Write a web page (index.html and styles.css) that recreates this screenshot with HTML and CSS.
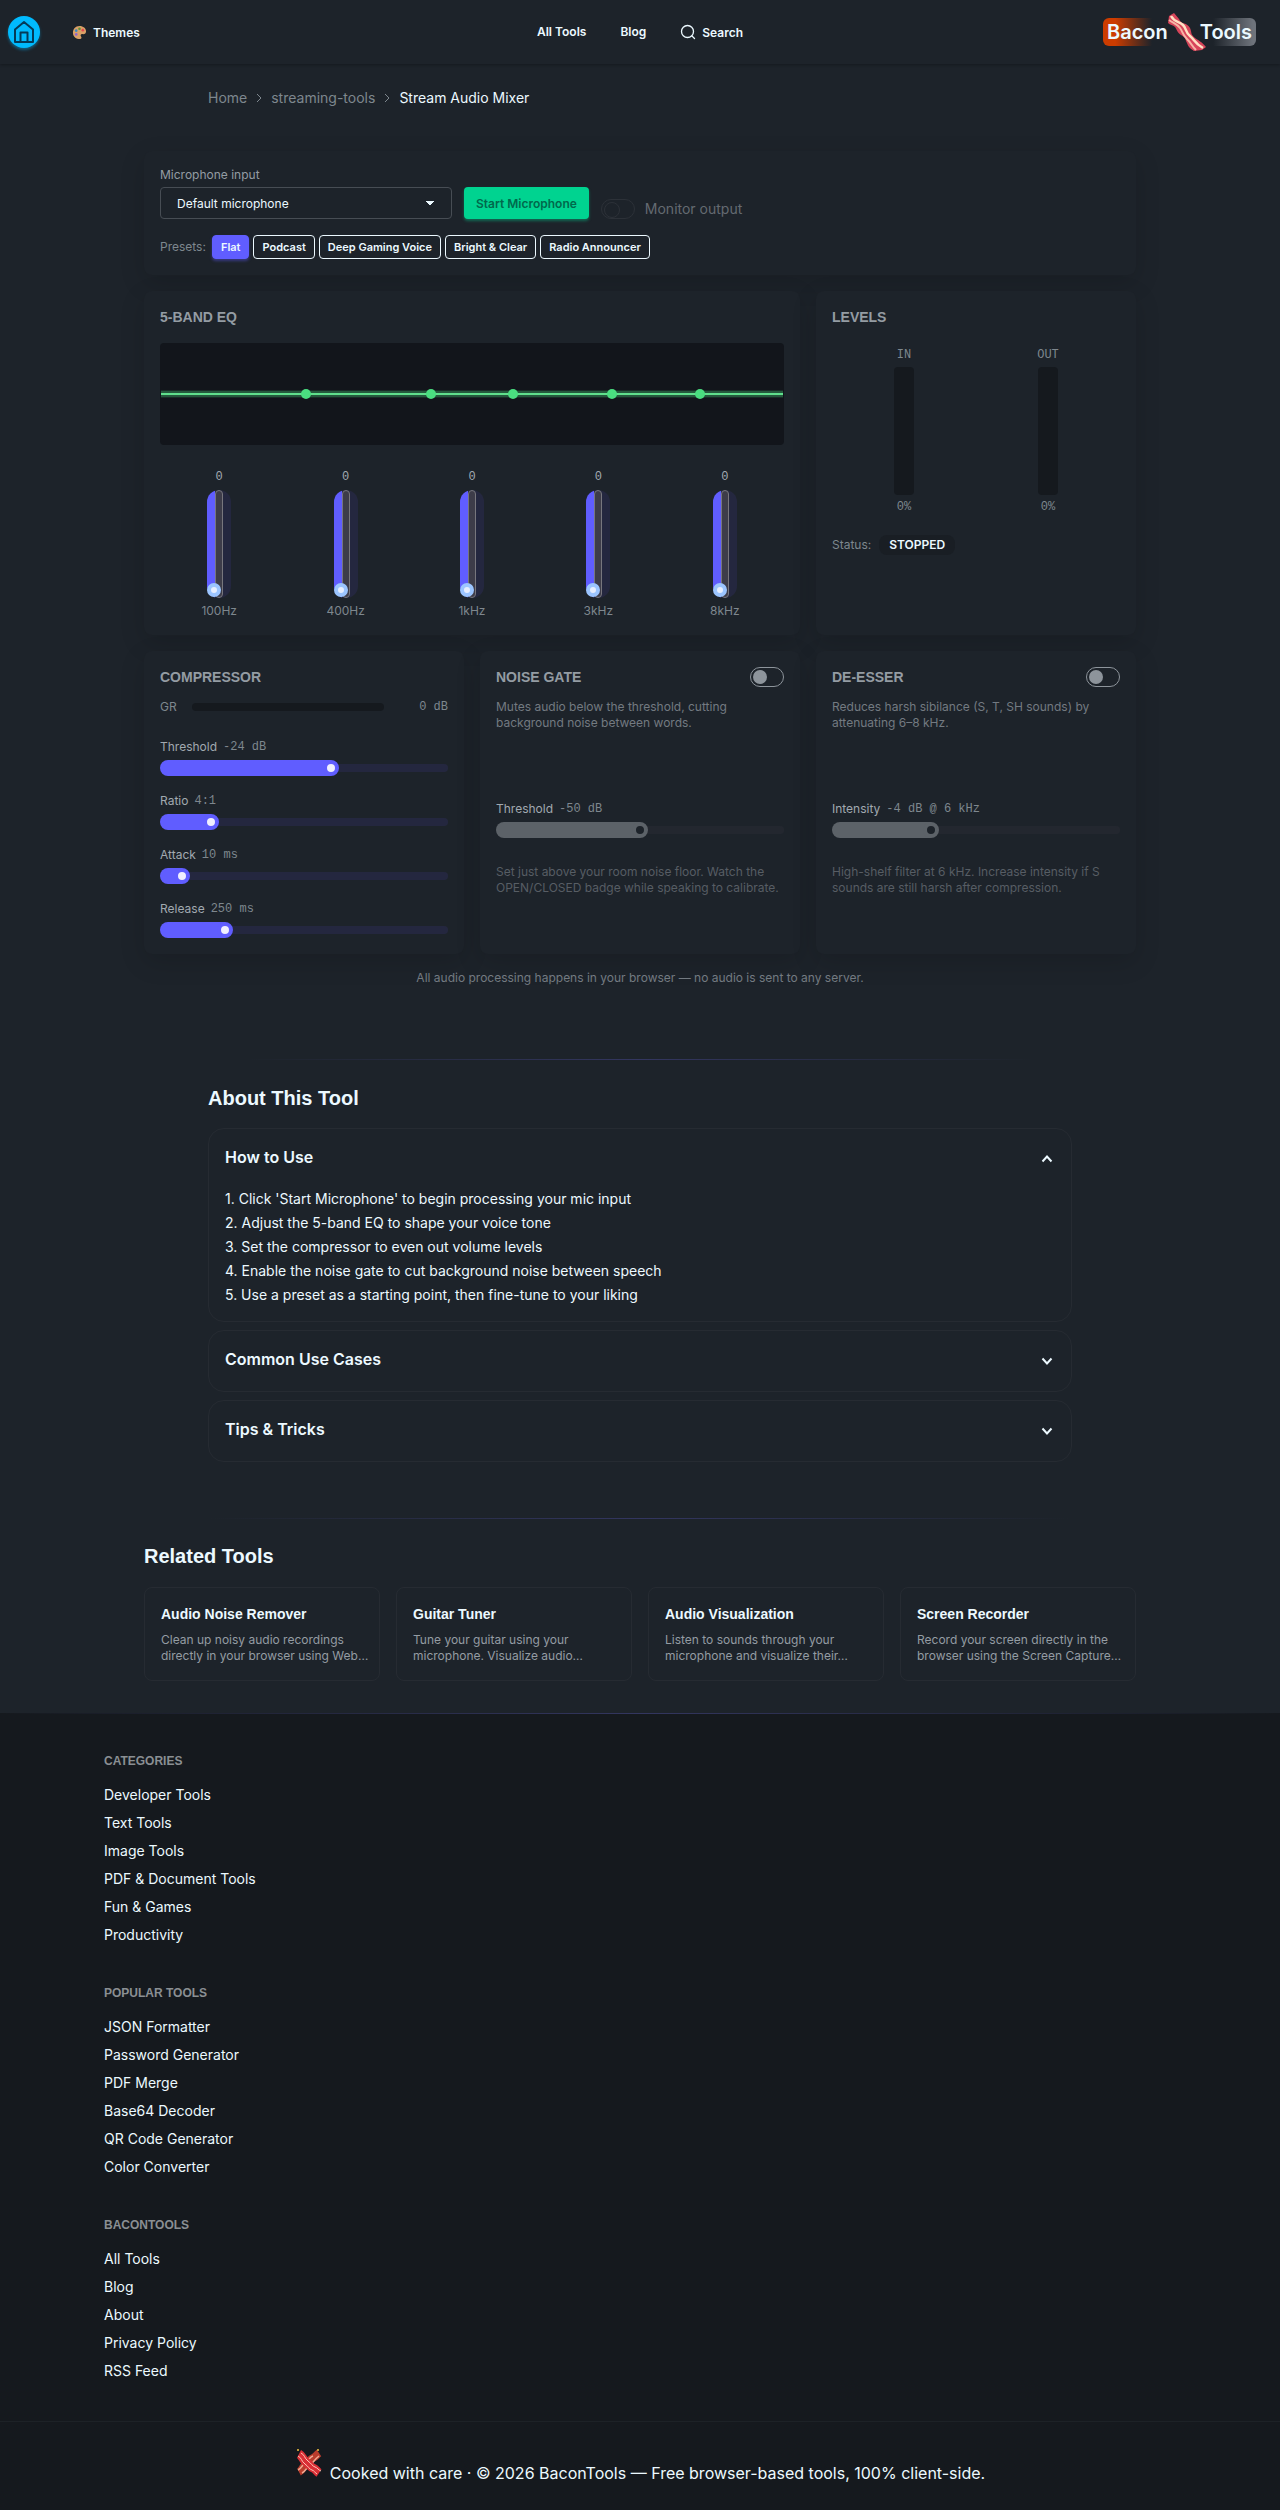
FILE: index.html
```
<!DOCTYPE html>
<html lang="en">
<head>
    <meta charset="UTF-8">
    <meta name="viewport" content="width=device-width, initial-scale=1.0">
    <title>Stream Audio Mixer - BaconTools</title>
    <link rel="stylesheet" href="styles.css">
</head>
<body>
    <header class="navbar">
        <div class="nav-start">
            <a href="#" class="home" aria-label="Home">
                <svg viewBox="0 0 32 32" width="32" height="32">
                    <path d="M7 13.500 16 6l9 7.500V26H7z M12.500 26v-9.500h7V26" fill="none" stroke="#043a58" stroke-width="2" stroke-linejoin="round"/>
                </svg>
            </a>
            <button class="nav-button">
                <svg viewBox="0 0 16 16" width="15" height="15">
                    <path d="M8 1C3.500 1 1 4.500 1 8.200 1 12.500 4.500 15 8.500 15c2 0 2-1.800 1-3-.8-1.200 0-2.500 1.500-2.300 2.500.3 4-.7 4-3C15 3.500 12 1 8 1z" fill="#d9a066"/>
                    <circle cx="4.500" cy="6" r="1.400" fill="#3b88c3"/>
                    <circle cx="8" cy="4" r="1.400" fill="#5c913b"/>
                    <circle cx="11.500" cy="5.500" r="1.400" fill="#e34850"/>
                    <circle cx="4.500" cy="10" r="1.400" fill="#9266cc"/>
                </svg>
                Themes
            </button>
        </div>
        <nav class="nav-center">
            <a href="#">All Tools</a>
            <a href="#">Blog</a>
            <button class="nav-button">
                <svg viewBox="0 0 16 16" width="16" height="16" fill="none" stroke="currentColor" stroke-width="1.300" stroke-linecap="round">
                    <circle cx="7.500" cy="7.500" r="6"/>
                    <path d="m12 12 2.500 2.500"/>
                </svg>
                Search
            </button>
        </nav>
        <a href="#" class="logo">
            <span>Bacon</span>
            <svg viewBox="0 0 38 38" width="38" height="38">
                <path d="M6 0 11 6C13 12 19 9 22 15c2 4 0 6 5 10 4 3 6 3 11 9l-4 3-8 1c-4-3-5-3-7-8-2-4-1-5-6-8-4-3-4-5-6-8-2-2-5-2-7-4l1-7z" fill="#d8455a"/>
                <path d="M3 3c4 7 8 5 12 9s2 7 7 11 4 7 13 12" fill="none" stroke="#ffe0c2" stroke-width="2.500"/>
                <path d="M1 7c4 3 8 4 11 8s2 6 7 11 4 6 9 11" fill="none" stroke="#f7b5a5" stroke-width="2"/>
            </svg>
            <span>Tools</span>
        </a>
    </header>

    <nav class="breadcrumbs" aria-label="Breadcrumb">
        <a href="#">Home</a>
        <svg viewBox="0 0 8 10" width="8" height="10"><path d="m2 1 4 4-4 4"/></svg>
        <a href="#">streaming-tools</a>
        <svg viewBox="0 0 8 10" width="8" height="10"><path d="m2 1 4 4-4 4"/></svg>
        <span>Stream Audio Mixer</span>
    </nav>

    <main class="mixer">
        <section class="card card-wide">
            <div class="input-row">
                <div class="field">
                    <label for="mic">Microphone input</label>
                    <select id="mic">
                        <option>Default microphone</option>
                    </select>
                </div>
                <button class="start-button">Start Microphone</button>
                <label class="monitor">
                    <input type="checkbox" class="toggle" disabled>
                    Monitor output
                </label>
            </div>
            <div class="presets">
                <span>Presets:</span>
                <button class="preset active">Flat</button>
                <button class="preset">Podcast</button>
                <button class="preset">Deep Gaming Voice</button>
                <button class="preset">Bright &amp; Clear</button>
                <button class="preset">Radio Announcer</button>
            </div>
        </section>

        <section class="card card-eq">
            <h2>5-BAND EQ</h2>
            <svg class="eq-curve" viewBox="0 0 624 102">
                <rect x="1" y="47" width="622" height="8" fill="#4ade80" opacity=".12"/>
                <rect x="1" y="48" width="622" height="6" fill="#4ade80" opacity=".25"/>
                <rect x="1" y="50" width="622" height="2" fill="#5fe08c"/>
                <g fill="#4ade80">
                    <circle cx="146" cy="51" r="5"/>
                    <circle cx="271" cy="51" r="5"/>
                    <circle cx="353" cy="51" r="5"/>
                    <circle cx="452" cy="51" r="5"/>
                    <circle cx="540" cy="51" r="5"/>
                </g>
            </svg>
            <div class="bands">
                <div class="band">
                    <output>0</output>
                    <input type="range" id="band1" class="fader" min="-12" max="12" value="0">
                    <label for="band1">100Hz</label>
                </div>
                <div class="band">
                    <output>0</output>
                    <input type="range" id="band2" class="fader" min="-12" max="12" value="0">
                    <label for="band2">400Hz</label>
                </div>
                <div class="band">
                    <output>0</output>
                    <input type="range" id="band3" class="fader" min="-12" max="12" value="0">
                    <label for="band3">1kHz</label>
                </div>
                <div class="band">
                    <output>0</output>
                    <input type="range" id="band4" class="fader" min="-12" max="12" value="0">
                    <label for="band4">3kHz</label>
                </div>
                <div class="band">
                    <output>0</output>
                    <input type="range" id="band5" class="fader" min="-12" max="12" value="0">
                    <label for="band5">8kHz</label>
                </div>
            </div>
        </section>

        <section class="card">
            <h2>LEVELS</h2>
            <div class="levels">
                <div class="level">
                    <span>IN</span>
                    <div class="meter"></div>
                    <span>0%</span>
                </div>
                <div class="level">
                    <span>OUT</span>
                    <div class="meter"></div>
                    <span>0%</span>
                </div>
            </div>
            <div class="status">
                <span>Status:</span>
                <strong class="badge">STOPPED</strong>
            </div>
        </section>

        <section class="card">
            <h2>COMPRESSOR</h2>
            <div class="reduction">
                <span>GR</span>
                <div class="reduction-bar"></div>
                <output>0 dB</output>
            </div>
            <div class="sliders">
                <div class="control">
                    <label for="threshold">Threshold <output>-24 dB</output></label>
                    <input type="range" id="threshold" class="range" min="-60" max="0" value="-24" style="--pos: 0.6">
                </div>
                <div class="control">
                    <label for="ratio">Ratio <output>4:1</output></label>
                    <input type="range" id="ratio" class="range" min="1" max="20" value="4" style="--pos: 0.158">
                </div>
                <div class="control">
                    <label for="attack">Attack <output>10 ms</output></label>
                    <input type="range" id="attack" class="range" min="0" max="200" value="10" style="--pos: 0.05">
                </div>
                <div class="control">
                    <label for="release">Release <output>250 ms</output></label>
                    <input type="range" id="release" class="range" min="50" max="1000" value="250" style="--pos: 0.21">
                </div>
            </div>
        </section>

        <section class="card">
            <div class="card-head">
                <h2>NOISE GATE</h2>
                <input type="checkbox" class="toggle" aria-label="Enable noise gate">
            </div>
            <p class="description">Mutes audio below the threshold, cutting background noise between words.</p>
            <div class="control">
                <label for="gate">Threshold <output>-50 dB</output></label>
                <input type="range" id="gate" class="range" min="-80" max="-20" value="-50" style="--pos: 0.5" disabled>
            </div>
            <p class="hint">Set just above your room noise floor. Watch the OPEN/CLOSED badge while speaking to calibrate.</p>
        </section>

        <section class="card">
            <div class="card-head">
                <h2>DE-ESSER</h2>
                <input type="checkbox" class="toggle" aria-label="Enable de-esser">
            </div>
            <p class="description">Reduces harsh sibilance (S, T, SH sounds) by attenuating 6–8 kHz.</p>
            <div class="control">
                <label for="deesser">Intensity <output>-4 dB @ 6 kHz</output></label>
                <input type="range" id="deesser" class="range" min="0" max="12" value="4" style="--pos: 0.333" disabled>
            </div>
            <p class="hint">High-shelf filter at 6 kHz. Increase intensity if S sounds are still harsh after compression.</p>
        </section>

        <p class="privacy">All audio processing happens in your browser — no audio is sent to any server.</p>
    </main>

    <section class="about">
        <h2>About This Tool</h2>
        <details open>
            <summary>How to Use <svg viewBox="0 0 12 8" width="12" height="8"><path d="m1.500 1.500 4.500 5 4.500-5"/></svg></summary>
            <p>1. Click 'Start Microphone' to begin processing your mic input</p>
            <p>2. Adjust the 5-band EQ to shape your voice tone</p>
            <p>3. Set the compressor to even out volume levels</p>
            <p>4. Enable the noise gate to cut background noise between speech</p>
            <p>5. Use a preset as a starting point, then fine-tune to your liking</p>
        </details>
        <details>
            <summary>Common Use Cases <svg viewBox="0 0 12 8" width="12" height="8"><path d="m1.500 1.500 4.500 5 4.500-5"/></svg></summary>
        </details>
        <details>
            <summary>Tips &amp; Tricks <svg viewBox="0 0 12 8" width="12" height="8"><path d="m1.500 1.500 4.500 5 4.500-5"/></svg></summary>
        </details>
    </section>

    <section class="related">
        <h2>Related Tools</h2>
        <div class="related-grid">
            <a href="#" class="related-card">
                <h3>Audio Noise Remover</h3>
                <p>Clean up noisy audio recordings<br>directly in your browser using Web…</p>
            </a>
            <a href="#" class="related-card">
                <h3>Guitar Tuner</h3>
                <p>Tune your guitar using your<br>microphone. Visualize audio…</p>
            </a>
            <a href="#" class="related-card">
                <h3>Audio Visualization</h3>
                <p>Listen to sounds through your<br>microphone and visualize their…</p>
            </a>
            <a href="#" class="related-card">
                <h3>Screen Recorder</h3>
                <p>Record your screen directly in the<br>browser using the Screen Capture…</p>
            </a>
        </div>
    </section>

    <footer class="footer">
        <div class="footer-links">
            <nav>
                <h2>CATEGORIES</h2>
                <a href="#">Developer Tools</a>
                <a href="#">Text Tools</a>
                <a href="#">Image Tools</a>
                <a href="#">PDF &amp; Document Tools</a>
                <a href="#">Fun &amp; Games</a>
                <a href="#">Productivity</a>
            </nav>
            <nav>
                <h2>POPULAR TOOLS</h2>
                <a href="#">JSON Formatter</a>
                <a href="#">Password Generator</a>
                <a href="#">PDF Merge</a>
                <a href="#">Base64 Decoder</a>
                <a href="#">QR Code Generator</a>
                <a href="#">Color Converter</a>
            </nav>
            <nav>
                <h2>BACONTOOLS</h2>
                <a href="#">All Tools</a>
                <a href="#">Blog</a>
                <a href="#">About</a>
                <a href="#">Privacy Policy</a>
                <a href="#">RSS Feed</a>
            </nav>
        </div>
        <div class="copyright">
            <svg viewBox="0 0 28 28" width="28" height="28">
                <g fill="none">
                    <path d="M4 23c4-2 3-5 7-8s4-5 7-6 3-3 6-5" stroke="#b83c2c" stroke-width="8"/>
                    <path d="M3 21c4-2 4-5 8-8s4-5 7-6M7 24c4-2 4-5 8-8s4-5 9-9" stroke="#f0a890" stroke-width="1.500"/>
                    <path d="M4 5c4 2 3 5 7 8s4 5 7 6 3 3 6 5" stroke="#d92f36" stroke-width="9"/>
                    <path d="M6 4c4 2 3 5 7 8s4 5 7 6 3 3 6 4M3 7c4 2 3 5 7 8s4 5 7 6 2 2 5 4" stroke="#ffc4b4" stroke-width="1"/>
                </g>
                <circle cx="3" cy="1" r="1" fill="#f5c542"/>
                <circle cx="23" cy="1" r="1" fill="#f5c542"/>
            </svg>
            <p>Cooked with care · © 2026 BaconTools — Free browser-based tools, 100% client-side.</p>
        </div>
    </footer>
</body>
</html>
```
FILE: styles.css
```
:root {
    --base: #1d232a;
    --dark: #15191e;
    --text: #ecf9ff;
    --muted: #7e878e;
    --primary: #605dff;
    --line: #262b32;
    --track: #24273f;
}

* {
    box-sizing: border-box;
}

body {
    margin: 0;
    background: var(--base);
    color: var(--text);
    font-family: Inter, "Open Sans", sans-serif;
    font-size: 14px;
    line-height: 20px;
}

h2, h3, p {
    margin: 0;
}

h2, h3 {
    font-family: "Liberation Sans", Arial, sans-serif;
    font-weight: 700;
}

a {
    color: inherit;
    text-decoration: none;
}

button, input, select {
    font-family: inherit;
    color: inherit;
    margin: 0;
}

svg {
    flex: none;
}

/* navbar */
.navbar {
    display: grid;
    grid-template-columns: 1fr auto 1fr;
    align-items: center;
    height: 64px;
    padding: 0 8px;
    box-shadow: 0 1px 3px rgba(0, 0, 0, 0.3);
    font-size: 12px;
    font-weight: 600;
}

.nav-start {
    display: flex;
    align-items: center;
    gap: 32px;
}

.home {
    width: 32px;
    height: 32px;
    border-radius: 50%;
    background: #00bafe;
    box-shadow: 0 2px 3px rgba(0, 186, 254, 0.4);
}

.nav-button {
    display: flex;
    align-items: center;
    gap: 6px;
    padding: 0;
    border: 0;
    background: none;
    font-size: 12px;
    font-weight: 600;
}

.nav-center {
    display: flex;
    align-items: center;
    gap: 34px;
}

.logo {
    display: flex;
    align-items: center;
    justify-self: end;
    height: 28px;
    margin-right: 16px;
    padding: 0 4px;
    border-radius: 6px;
    background: linear-gradient(to right, #cc3c00, #cc3c00 8%, transparent 32%, transparent 72%, #6e737b 98%);
    font-size: 20px;
    font-weight: 600;
}

.logo svg {
    margin-right: -6px;
}

/* breadcrumbs */
.breadcrumbs {
    display: flex;
    align-items: center;
    gap: 8px;
    max-width: 896px;
    margin: 24px auto 0;
    padding: 0 16px;
}

.breadcrumbs a {
    color: var(--muted);
}

.breadcrumbs svg {
    fill: none;
    stroke: var(--muted);
}

/* mixer */
.mixer {
    display: grid;
    grid-template-columns: repeat(3, 1fr);
    gap: 16px;
    max-width: 1024px;
    margin: 43px auto 0;
    padding: 0 16px;
    font-size: 12px;
    line-height: 16px;
    color: var(--muted);
}

.card {
    padding: 16px;
    border-radius: 8px;
    background: var(--base);
    box-shadow: 0 8px 26px rgba(0, 0, 0, 0.14);
}

.card-wide {
    grid-column: 1 / -1;
}

.card-eq {
    grid-column: span 2;
}

.card h2 {
    font-size: 14px;
    line-height: 20px;
    color: #949ca3;
}

.input-row {
    display: flex;
    align-items: flex-end;
    gap: 12px;
}

.field {
    display: flex;
    flex-direction: column;
    gap: 4px;
    width: 292px;
}

.field label {
    color: #949ca3;
}

select {
    appearance: none;
    height: 32px;
    padding: 0 16px;
    border: 1px solid #474d54;
    border-radius: 4px;
    background: linear-gradient(45deg, transparent 50%, var(--text) 50%) right 21px center / 4px 4px no-repeat,
                linear-gradient(-45deg, transparent 50%, var(--text) 50%) right 17px center / 4px 4px no-repeat;
    font-size: 12px;
    color: var(--text);
}

.start-button {
    height: 32px;
    padding: 0 12px;
    border: 0;
    border-radius: 4px;
    background: #00d390;
    box-shadow: 0 2px 3px rgba(0, 211, 144, 0.4);
    font-size: 12px;
    font-weight: 600;
    color: #00694c;
}

.monitor {
    display: flex;
    align-items: center;
    gap: 10px;
    font-size: 14px;
    line-height: 20px;
    color: #646a71;
}

.toggle {
    appearance: none;
    flex: none;
    width: 34px;
    height: 20px;
    padding: 2px;
    border: 1px solid #8d949b;
    border-radius: 10px;
}

.toggle::before {
    content: "";
    display: block;
    width: 14px;
    height: 14px;
    border-radius: 50%;
    background: #8d949b;
}

.toggle:disabled {
    border-color: #2c3138;
}

.toggle:disabled::before {
    border: 1px solid #2c3138;
    background: none;
}

.presets {
    display: flex;
    align-items: center;
    gap: 4px;
    margin-top: 16px;
}

.presets span {
    margin-right: 2px;
}

.preset {
    height: 24px;
    padding: 0 8px;
    border: 1px solid var(--text);
    border-radius: 4px;
    background: none;
    font-size: 11px;
    font-weight: 600;
    color: var(--text);
}

.preset.active {
    border-color: var(--primary);
    background: var(--primary);
    box-shadow: 0 2px 3px rgba(96, 93, 255, 0.4);
}

.eq-curve {
    display: block;
    width: 100%;
    margin: 16px 0 24px;
    border-radius: 4px;
    background: #12151b;
}

.bands {
    display: grid;
    grid-template-columns: repeat(5, 1fr);
    gap: 8px;
}

.band {
    display: flex;
    flex-direction: column;
    align-items: center;
    gap: 5px;
}

.band output {
    color: #a1a9b0;
}

output {
    font-family: "Liberation Mono", monospace;
}

/* upright fader: filled left part, slot in the middle, knob at the bottom */
.fader {
    appearance: none;
    width: 24px;
    height: 108px;
    border-radius: 12px;
    background: linear-gradient(to right, var(--primary) 8px, var(--track) 8px);
}

.fader::-webkit-slider-runnable-track {
    height: 108px;
    margin: 0 8px;
    border: 1px solid #77767d;
    border-radius: 4px;
    background: #3d3c49;
}

.fader::-webkit-slider-thumb {
    appearance: none;
    width: 14px;
    height: 14px;
    margin: 92px 0 0 -5px;
    border: 4px solid #9cc5ff;
    border-radius: 50%;
    background: #e6eeff;
}

.levels {
    display: grid;
    grid-template-columns: 1fr 1fr;
    margin: 20px 0;
    font-family: "Liberation Mono", monospace;
}

.level {
    display: flex;
    flex-direction: column;
    align-items: center;
    gap: 4px;
}

.meter {
    width: 20px;
    height: 128px;
    border-radius: 4px;
    background: var(--dark);
}

.status {
    display: flex;
    align-items: center;
    gap: 8px;
}

.badge {
    padding: 2px 10px;
    border-radius: 8px;
    background: #191e24;
    font-weight: 600;
    color: var(--text);
}

.reduction {
    display: grid;
    grid-template-columns: 32px 2fr 1fr;
    align-items: center;
    margin: 12px 0 24px;
}

.reduction-bar {
    width: 192px;
    height: 8px;
    border-radius: 4px;
    background: var(--dark);
}

.reduction output {
    text-align: right;
}

.sliders {
    display: grid;
    gap: 17px;
}

.control {
    display: grid;
    gap: 5px;
}

.control label {
    display: flex;
    gap: 6px;
    color: #a1a9b0;
}

.control output {
    color: var(--muted);
}

.range {
    --fill: var(--primary);
    --knob: #f0efff;
    --stop: calc(8px + (100% - 16px) * var(--pos));
    appearance: none;
    width: 100%;
    height: 16px;
    border-radius: 8px;
    background: linear-gradient(to right, var(--fill) var(--stop), transparent var(--stop));
}

.range::-webkit-slider-runnable-track {
    height: 8px;
    border-radius: 4px;
    background: linear-gradient(to right, transparent var(--stop), var(--track) var(--stop));
}

.range::-webkit-slider-thumb {
    appearance: none;
    width: 16px;
    height: 16px;
    margin-top: -4px;
    border: 4px solid var(--fill);
    border-radius: 50%;
    background: var(--knob);
}

.range:disabled {
    --fill: #5c6268;
    --knob: #1d232a;
    --track: #23272f;
}

.card-head {
    display: flex;
    align-items: center;
    justify-content: space-between;
}

.description {
    margin: 12px 0 70px;
    color: #737a81;
}

.hint {
    margin-top: 26px;
    color: #575d64;
}

.privacy {
    grid-column: 1 / -1;
    text-align: center;
    color: #737a81;
}

/* about */
.about {
    max-width: 896px;
    margin: 73px auto 0;
    padding: 25px 16px 0;
    background: linear-gradient(to right, transparent 6%, #333660 50%, transparent 94%) top / 100% 1px no-repeat;
}

.about h2, .related h2 {
    font-size: 20px;
    line-height: 28px;
}

.about h2 {
    margin-bottom: 16px;
}

details {
    margin-bottom: 8px;
    padding: 14px 16px 18px;
    border: 1px solid var(--line);
    border-radius: 16px;
}

details[open] {
    padding-bottom: 14px;
}

summary {
    display: flex;
    align-items: center;
    justify-content: space-between;
    height: 28px;
    padding-right: 2px;
    font-size: 16px;
    font-weight: 600;
}

details[open] summary {
    margin-bottom: 16px;
}

summary svg {
    margin-top: 4px;
    fill: none;
    stroke: currentColor;
    stroke-width: 2;
}

details[open] summary svg {
    transform: rotate(180deg);
}

details p {
    line-height: 24px;
}

/* related */
.related {
    max-width: 1024px;
    margin: 56px auto 0;
    padding: 24px 16px 32px;
    background: linear-gradient(to right, transparent 8%, #333660 50%, transparent 92%) top / 100% 1px no-repeat;
}

.related-grid {
    display: grid;
    grid-template-columns: repeat(4, 1fr);
    gap: 16px;
    margin-top: 17px;
}

.related-card {
    padding: 16px;
    border: 1px solid var(--line);
    border-radius: 8px;
    overflow: hidden;
}

.related-card h3 {
    margin-bottom: 8px;
    font-size: 14px;
    line-height: 20px;
}

.related-card p {
    font-size: 12px;
    line-height: 16px;
    color: #949ca3;
    white-space: nowrap;
}

/* footer */
.footer {
    background: linear-gradient(to right, transparent, #333660, transparent) top / 100% 1px no-repeat, var(--dark);
}

.footer-links {
    display: grid;
    gap: 40px;
    max-width: 1104px;
    margin: 0 auto;
    padding: 40px 16px;
}

.footer nav {
    display: grid;
    justify-items: start;
    gap: 8px;
}

.footer h2 {
    margin-bottom: 8px;
    font-size: 12px;
    line-height: 16px;
    color: #8a8f93;
}

.copyright {
    display: flex;
    justify-content: center;
    gap: 7px;
    padding: 27px 16px;
    border-top: 1px solid #1d2227;
    font-size: 16px;
}

.copyright p {
    margin-top: 14px;
}
```
